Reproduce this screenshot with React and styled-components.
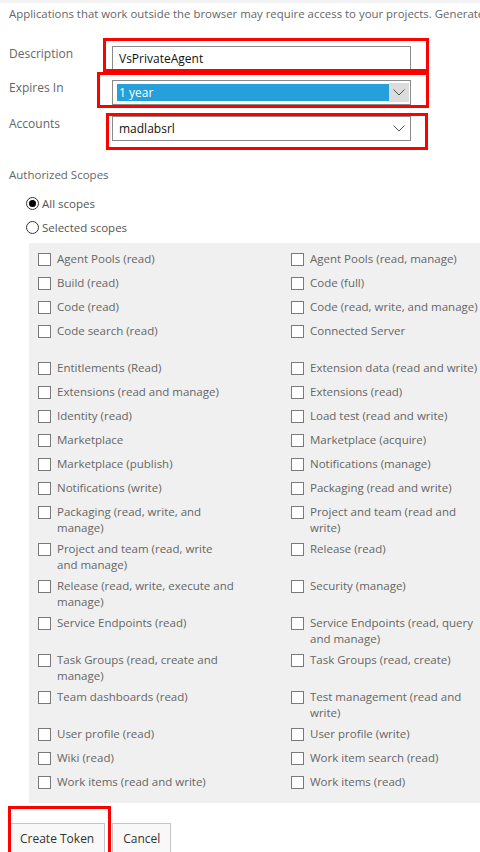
import React from 'react';
import styled, { createGlobalStyle } from 'styled-components';

const GlobalStyle = createGlobalStyle`
  html, body {
    margin: 0;
    padding: 0;
    background: #ffffff;
  }
  body {
    font-family: "Open Sans", "Noto Sans", sans-serif;
    font-size: 11.5px;
    color: #666666;
    overflow: hidden;
  }
`;

const scopes = [
  ['Agent Pools (read)', 'Agent Pools (read, manage)'],
  ['Build (read)', 'Code (full)'],
  ['Code (read)', 'Code (read, write, and manage)'],
  ['Code search (read)', 'Connected Server', true],
  ['Entitlements (Read)', 'Extension data (read and write)'],
  ['Extensions (read and manage)', 'Extensions (read)'],
  ['Identity (read)', 'Load test (read and write)'],
  ['Marketplace', 'Marketplace (acquire)'],
  ['Marketplace (publish)', 'Notifications (manage)'],
  ['Notifications (write)', 'Packaging (read and write)'],
  ['Packaging (read, write, and\nmanage)', 'Project and team (read and\nwrite)'],
  ['Project and team (read, write\nand manage)', 'Release (read)'],
  ['Release (read, write, execute and\nmanage)', 'Security (manage)'],
  ['Service Endpoints (read)', 'Service Endpoints (read, query\nand manage)'],
  ['Task Groups (read, create and\nmanage)', 'Task Groups (read, create)'],
  ['Team dashboards (read)', 'Test management (read and\nwrite)'],
  ['User profile (read)', 'User profile (write)'],
  ['Wiki (read)', 'Work item search (read)'],
  ['Work items (read and write)', 'Work items (read)'],
];

const Chevron = () => (
  <svg width="12" height="7" viewBox="0 0 12 7">
    <path d="M0.5 0.5 L6 6 L11.5 0.5" fill="none" stroke="#555" strokeWidth="1" />
  </svg>
);

const App = () => {
  return (
    <>
      <GlobalStyle />
      <TopStrip />
      <Page>
        <Intro>Applications that work outside the browser may require access to your projects. Generate a token to allow access.</Intro>

        <FormRow $top={24}>
          <Label>Description</Label>
          <FieldWrap>
            <TextInput>VsPrivateAgent</TextInput>
            <Highlight $t={-8} $l={-9} $r={-18} $b={-2} />
          </FieldWrap>
        </FormRow>

        <FormRow $top={10}>
          <Label>Expires In</Label>
          <FieldWrap>
            <Select>
              <Selected>1 year</Selected>
              <ArrowBox><Chevron /></ArrowBox>
            </Select>
            <Highlight $t={-8} $l={-15} $r={-18} $b={-3} />
          </FieldWrap>
        </FormRow>

        <FormRow $top={11}>
          <Label>Accounts</Label>
          <FieldWrap>
            <Select>
              <SelectValue>madlabsrl</SelectValue>
              <PlainArrow><Chevron /></PlainArrow>
            </Select>
            <Highlight $t={-3} $l={-6} $r={-17} $b={-9} />
          </FieldWrap>
        </FormRow>

        <SectionTitle>Authorized Scopes</SectionTitle>
        <RadioGroup>
          <RadioRow>
            <Radio $checked />
            <span>All scopes</span>
          </RadioRow>
          <RadioRow>
            <Radio />
            <span>Selected scopes</span>
          </RadioRow>
        </RadioGroup>

        <ScopePanel>
          {scopes.map(([left, right, tall]) => (
            <React.Fragment key={left}>
              <ScopeItem $tall={tall}>
                <Check />
                <ScopeText>{left}</ScopeText>
              </ScopeItem>
              <ScopeItem $tall={tall}>
                <Check />
                <ScopeText>{right}</ScopeText>
              </ScopeItem>
            </React.Fragment>
          ))}
        </ScopePanel>

        <Buttons>
          <ButtonWrap>
            <Button>Create Token</Button>
            <Highlight $t={-17} $l={-1} $r={-6} $b={-30} />
          </ButtonWrap>
          <Button>Cancel</Button>
        </Buttons>
      </Page>
    </>
  );
}

const TopStrip = styled.div`
  height: 3px;
  background: #f3f3f3;
`;

const Page = styled.div`
  padding: 0 0 0 9px;
`;

const Intro = styled.div`
  margin-top: 3px;
  line-height: 16px;
  font-size: 11.4px;
  white-space: nowrap;
  overflow: hidden;
  color: #666;
`;

const FormRow = styled.div`
  display: flex;
  align-items: flex-start;
  margin-top: ${(p) => p.$top}px;
`;

const Label = styled.div`
  width: 103px;
  flex: none;
  padding-top: 0;
  line-height: 16px;
  font-size: 12px;
  color: #666;
`;

const FieldWrap = styled.div`
  position: relative;
  width: 299px;
`;

const Highlight = styled.span`
  position: absolute;
  top: ${(p) => p.$t}px;
  left: ${(p) => p.$l}px;
  right: ${(p) => p.$r}px;
  bottom: ${(p) => p.$b}px;
  border: 3px solid #ff0000;
  pointer-events: none;
`;

const TextInput = styled.div`
  box-sizing: border-box;
  height: 24px;
  border: 1px solid #8a8a8a;
  padding: 0 6px;
  display: flex;
  align-items: center;
  font-size: 12px;
  color: #111;
`;

const Select = styled.div`
  box-sizing: border-box;
  height: 25px;
  border: 1px solid #8a8a8a;
  display: flex;
  align-items: stretch;
  padding: 3px 1px 3px 4px;
  font-size: 12px;
`;

const Selected = styled.div`
  flex: 1;
  background: #26a0da;
  color: #fff;
  display: flex;
  align-items: center;
  padding-left: 2px;
`;

const SelectValue = styled.div`
  flex: 1;
  color: #111;
  display: flex;
  align-items: center;
  padding-left: 2px;
`;

const ArrowBox = styled.div`
  width: 20px;
  margin-top: -1px;
  margin-bottom: -1px;
  background: #dcdcdc;
  display: flex;
  align-items: center;
  justify-content: center;
`;

const PlainArrow = styled(ArrowBox)`
  background: transparent;
`;

const SectionTitle = styled.div`
  margin-top: 26px;
  line-height: 16px;
  color: #666;
`;

const RadioGroup = styled.div`
  margin-top: 12px;
  padding-left: 14px;
`;

const RadioRow = styled.div`
  display: flex;
  align-items: center;
  height: 16px;
  margin-bottom: 8px;
  color: #555;
  span {
    margin-left: 3px;
  }
`;

const Radio = styled.span`
  box-sizing: border-box;
  width: 13px;
  height: 13px;
  border: 1px solid #333;
  border-radius: 50%;
  background: #fff;
  display: flex;
  align-items: center;
  justify-content: center;
  &::after {
    content: '';
    width: 7px;
    height: 7px;
    border-radius: 50%;
    background: ${(p) => (p.$checked ? '#000' : 'transparent')};
  }
`;

const ScopePanel = styled.div`
  margin-left: 20px;
  margin-top: 2px;
  background: #f0f0f0;
  padding: 8px 0 5px 9px;
  display: grid;
  grid-template-columns: 253px 1fr;
  align-items: start;
`;

const ScopeItem = styled.div`
  display: flex;
  align-items: flex-start;
  min-height: ${(p) => (p.$tall ? 32 : 19)}px;
  margin-bottom: 5px;
`;

const Check = styled.span`
  box-sizing: border-box;
  flex: none;
  width: 13px;
  height: 13px;
  margin-top: 2px;
  margin-right: 6px;
  border: 1px solid #7a7a7a;
  background: #fff;
`;

const ScopeText = styled.span`
  white-space: pre;
  line-height: 16px;
  color: #666;
`;

const Buttons = styled.div`
  display: flex;
  gap: 7px;
  margin-top: 20px;
`;

const ButtonWrap = styled.div`
  position: relative;
`;

const Button = styled.button`
  box-sizing: border-box;
  height: 30px;
  padding: 0 10px;
  border: 1px solid #c6c6c6;
  background: #f8f8f8;
  color: #333;
  font-family: "Open Sans", "Noto Sans", sans-serif;
  font-size: 12px;
`;

export default App;
